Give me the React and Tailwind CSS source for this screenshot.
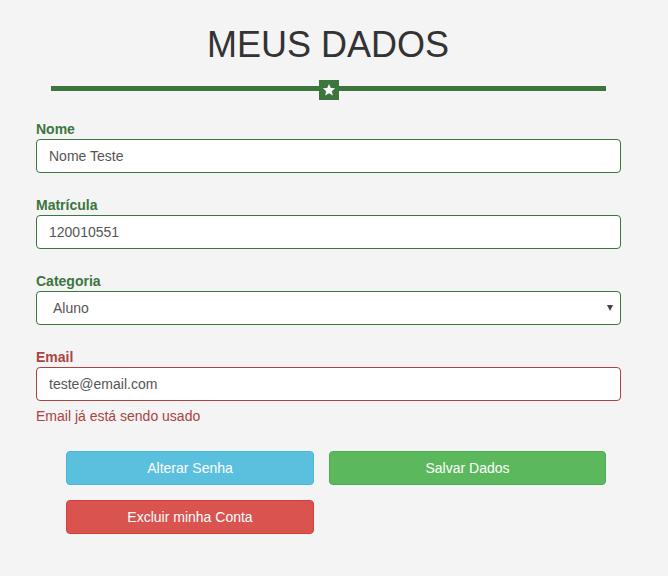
import React from "react";

const font = { fontFamily: '"Liberation Sans", Arial, sans-serif' };

function Field({ label, value, error }) {
  const color = error ? "text-[#a94442]" : "text-[#3c763d]";
  const border = error ? "border-[#a94442]" : "border-[#3c763d]";
  return (
    <div className="flex flex-col">
      <label className={`font-bold text-[14px] leading-[20px] ${color}`}>{label}</label>
      <input
        readOnly
        value={value}
        className={`h-[34px] w-full rounded-[4px] border bg-white px-[12px] text-[14px] text-[#555] outline-none ${border}`}
      />
    </div>
  );
}

export default function App() {
  return (
    <div className="min-h-[576px] w-full bg-[#f4f4f4] pt-[25px]" style={font}>
      <h1 className="pr-[12px] text-center text-[36px] font-normal leading-[40px] text-[#333]">MEUS DADOS</h1>
      <div className="ml-[51px] mt-[15px] flex w-[555px] items-start">
        <div className="mt-[6px] h-[5px] flex-1 bg-[#3c763d]" />
        <div className="flex h-[20px] w-[20px] items-center justify-center bg-[#3c763d]">
          <svg width="14" height="14" viewBox="0 0 24 24">
            <path
              d="M12 1.5l3.1 6.9 7.4.7-5.6 5 1.7 7.4L12 17.6l-6.6 3.9 1.7-7.4-5.6-5 7.4-.7z"
              fill="#fff"
            />
          </svg>
        </div>
        <div className="mt-[6px] h-[5px] flex-1 bg-[#3c763d]" />
      </div>

      <div className="ml-[36px] mt-[19px] flex w-[585px] flex-col gap-[22px]">
        <Field label="Nome" value="Nome Teste" />
        <Field label="Matrícula" value="120010551" />
        <div className="flex flex-col">
          <label className="font-bold text-[14px] leading-[20px] text-[#3c763d]">Categoria</label>
          <div className="relative">
            <select
              defaultValue="Aluno"
              className="h-[34px] w-full appearance-none rounded-[4px] border border-[#3c763d] bg-white pl-[16px] pr-[24px] text-[14px] text-[#555] outline-none"
            >
              <option>Aluno</option>
              <option>Professor</option>
            </select>
            <div className="pointer-events-none absolute right-[8px] top-[14px] h-0 w-0 border-l-[3px] border-r-[3px] border-t-[6px] border-l-transparent border-r-transparent border-t-[#444]" />
          </div>
        </div>
        <div className="flex flex-col">
          <Field label="Email" value="teste@email.com" error />
          <p className="mt-[5px] text-[14px] leading-[20px] text-[#a94442]">Email já está sendo usado</p>
        </div>
      </div>

      <div className="ml-[66px] mt-[25px] flex flex-col gap-[15px] pb-[42px]">
        <div className="flex gap-[15px]">
          <button className="h-[34px] w-[248px] rounded-[4px] border border-[#46b8da] bg-[#5bc0de] text-[14px] text-white">
            Alterar Senha
          </button>
          <button className="h-[34px] w-[277px] rounded-[4px] border border-[#4cae4c] bg-[#5cb85c] text-[14px] text-white">
            Salvar Dados
          </button>
        </div>
        <div className="flex">
          <button className="h-[34px] w-[248px] rounded-[4px] border border-[#d43f3a] bg-[#d9534f] text-[14px] text-white">
            Excluir minha Conta
          </button>
        </div>
      </div>
    </div>
  );
}
